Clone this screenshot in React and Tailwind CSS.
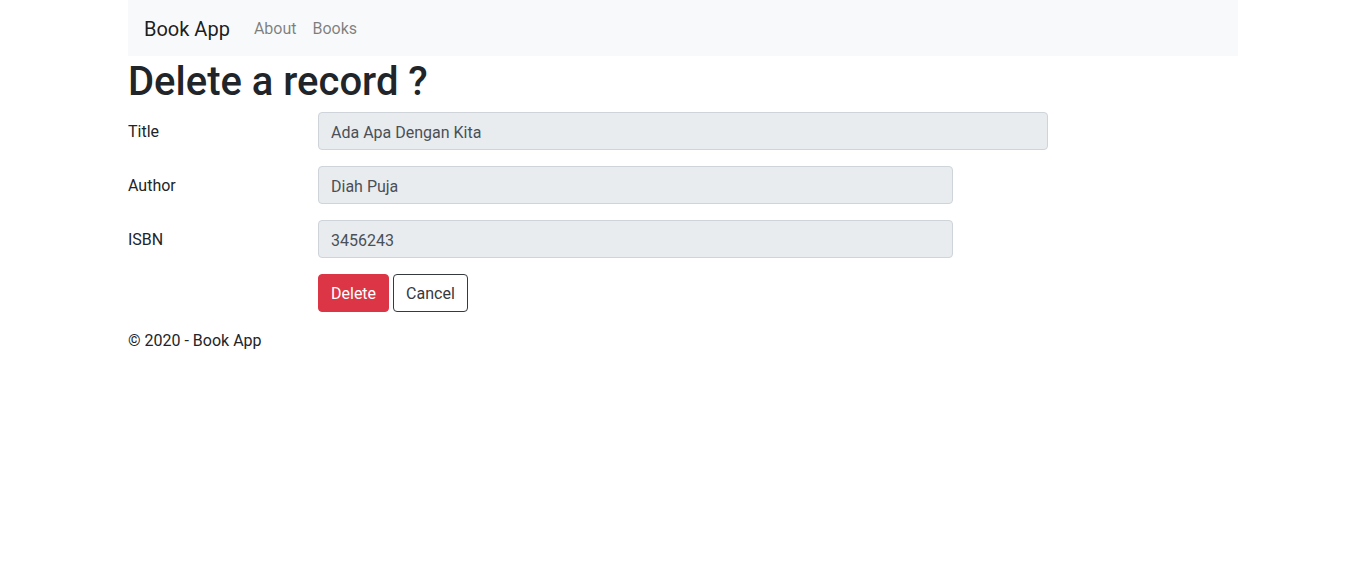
import React from 'react';

const fields = [
  { label: 'Title', value: 'Ada Apa Dengan Kita', width: 'w-[730px]' },
  { label: 'Author', value: 'Diah Puja', width: 'w-[635px]' },
  { label: 'ISBN', value: '3456243', width: 'w-[635px]' },
];

export default function App() {
  return (
    <div className="min-h-screen bg-white text-[#212529] text-base leading-6" style={{ fontFamily: 'Roboto, "Liberation Sans", sans-serif' }}>
      <div className="w-[1110px] mx-auto">
        {/* navbar */}
        <nav className="h-14 bg-[#f8f9fa] px-4 pt-[2px] flex items-center">
          <span className="text-xl leading-[30px] text-black/90 mr-4">Book App</span>
          <a className="px-2 text-black/50">About</a>
          <a className="px-2 text-black/50">Books</a>
        </nav>

        <h1 className="text-[40px] leading-[48px] font-medium pt-[2px] mb-[6px]">Delete a record ?</h1>

        {fields.map((f) => (
          <div key={f.label} className="flex mb-4">
            <label className="w-[190px] pt-[8px] pb-[6px]">{f.label}</label>
            <div className={`${f.width} h-[38px] bg-[#e9ecef] border border-[#ced4da] rounded px-3 pt-[3px] flex items-center text-[#495057]`}>
              {f.value}
            </div>
          </div>
        ))}

        <div className="flex mb-4 pl-[190px] gap-1">
          <button className="h-[38px] px-3 pt-[2px] rounded bg-[#dc3545] border border-[#dc3545] text-white">Delete</button>
          <button className="h-[38px] px-3 pt-[2px] rounded border border-[#343a40] text-[#343a40]">Cancel</button>
        </div>

        <footer className="pt-px">© 2020 - Book App</footer>
      </div>
    </div>
  );
}
